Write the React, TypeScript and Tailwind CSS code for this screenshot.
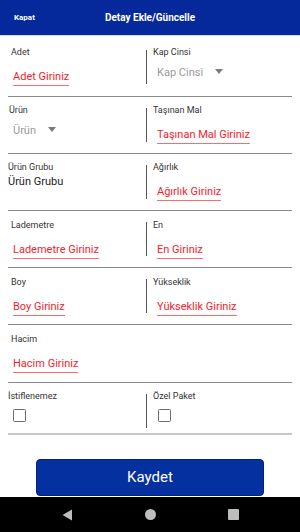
import { ReactNode } from "react";

const font = { fontFamily: "Roboto, 'Noto Sans', sans-serif" };

function Label({ children }: { children: ReactNode }) {
  return <div className="text-[9px] leading-[11px] text-[#333]">{children}</div>;
}

function Input({ text }: { text: string }) {
  return (
    <div className="mt-[5px]">
      <span className="inline-block text-[11px] leading-[14px] pb-[1px] text-[#f5222d] border-b border-[#ff6b6b]">
        {text}
      </span>
    </div>
  );
}

function Select({ text }: { text: string }) {
  return (
    <div className="mt-[8px] flex items-center gap-[12px]">
      <span className="text-[11px] leading-[14px] text-[#9a9a9a]">{text}</span>
      <svg width="8" height="5" viewBox="0 0 8 5" className="-mt-[3px]">
        <path d="M0 0h8L4 5z" fill="#7a7a7a" />
      </svg>
    </div>
  );
}

function Checkbox() {
  return (
    <div className="mt-[7px] ml-[5px] w-[13px] h-[13px] border-[1.5px] border-[#6b6b6b] rounded-[1.5px]" />
  );
}

function Divider({ top = "mt-[11px]" }: { top?: string }) {
  return <div className={`${top} w-px h-[34px] bg-[#555] shrink-0`} />;
}

export default function App() {
  return (
    <div className="w-[300px] h-[532px] bg-white flex flex-col overflow-hidden" style={font}>
      {/* Header */}
      <div className="h-[35px] shrink-0 bg-[#05299a] grid grid-cols-[1fr_auto_1fr] items-center shadow-[0_1px_1px_rgba(0,0,0,0.15)]">
        <span className="pl-[14px] text-[8px] font-bold text-white">Kapat</span>
        <span className="text-[10px] font-bold text-white">Detay Ekle/Güncelle</span>
        <span />
      </div>

      {/* Row 1 */}
      <div className="mx-2 h-[62px] flex border-b border-[#8a8a8a]">
        <div className="w-[138px] pt-[12px] pl-[3px]">
          <Label>Adet</Label>
          <div className="pl-[2px]">
            <Input text="Adet Giriniz" />
          </div>
        </div>
        <Divider top="mt-[15px]" />
        <div className="flex-1 pt-[12px] pl-[6px]">
          <Label>Kap Cinsi</Label>
          <div className="pl-[4px]">
            <Select text="Kap Cinsi" />
          </div>
        </div>
      </div>

      {/* Row 2 */}
      <div className="mx-2 h-[57px] flex border-b border-[#8a8a8a]">
        <div className="w-[138px] pt-[8px] pl-[1px]">
          <Label>Ürün</Label>
          <div className="pl-[4px]">
            <Select text="Ürün" />
          </div>
        </div>
        <Divider />
        <div className="flex-1 pt-[8px] pl-[6px]">
          <Label>Taşınan Mal</Label>
          <div className="pl-[4px]">
            <Input text="Taşınan Mal Giriniz" />
          </div>
        </div>
      </div>

      {/* Row 3 */}
      <div className="mx-2 h-[57px] flex border-b border-[#8a8a8a]">
        <div className="w-[138px] pt-[8px]">
          <Label>Ürün Grubu</Label>
          <div className="mt-[2px] text-[11px] leading-[14px] text-[#222]">Ürün Grubu</div>
        </div>
        <Divider />
        <div className="flex-1 pt-[8px] pl-[6px]">
          <Label>Ağırlık</Label>
          <div className="pl-[4px]">
            <Input text="Ağırlık Giriniz" />
          </div>
        </div>
      </div>

      {/* Row 4 */}
      <div className="mx-2 h-[57px] flex border-b border-[#8a8a8a]">
        <div className="w-[138px] pt-[9px] pl-[3px]">
          <Label>Lademetre</Label>
          <div className="pl-[2px]">
            <Input text="Lademetre Giriniz" />
          </div>
        </div>
        <Divider />
        <div className="flex-1 pt-[9px] pl-[6px]">
          <Label>En</Label>
          <div className="pl-[4px]">
            <Input text="En Giriniz" />
          </div>
        </div>
      </div>

      {/* Row 5 */}
      <div className="mx-2 h-[57px] flex border-b border-[#8a8a8a]">
        <div className="w-[138px] pt-[9px] pl-[3px]">
          <Label>Boy</Label>
          <div className="pl-[2px]">
            <Input text="Boy Giriniz" />
          </div>
        </div>
        <Divider />
        <div className="flex-1 pt-[9px] pl-[6px]">
          <Label>Yükseklik</Label>
          <div className="pl-[4px]">
            <Input text="Yükseklik Giriniz" />
          </div>
        </div>
      </div>

      {/* Row 6 */}
      <div className="mx-2 h-[58px] border-b border-[#8a8a8a] pt-[9px] pl-[3px]">
        <Label>Hacim</Label>
        <div className="pl-[2px]">
          <Input text="Hacim Giriniz" />
        </div>
      </div>

      {/* Row 7 */}
      <div className="mx-2 h-[52px] flex border-b-2 border-[#c8c8c8]">
        <div className="w-[138px] pt-[8px]">
          <Label>İstiflenemez</Label>
          <Checkbox />
        </div>
        <Divider />
        <div className="flex-1 pt-[8px] pl-[6px]">
          <Label>Özel Paket</Label>
          <Checkbox />
        </div>
      </div>

      {/* Save */}
      <div className="mt-[24px] px-[36px]">
        <button className="w-full h-[37px] rounded-[4px] bg-[#0530a0] border border-[#02237e] text-white text-[15px]">
          Kaydet
        </button>
      </div>

      {/* Android nav */}
      <div className="mt-auto h-[35px] bg-black flex items-center justify-center gap-[63px]">
        <div className="w-[20px] flex justify-center">
          <svg width="11" height="12" viewBox="0 0 11 12">
            <path d="M10 0.5v11L0.5 6z" fill="#bdbdbd" />
          </svg>
        </div>
        <div className="w-[20px] flex justify-center">
          <div className="w-[11px] h-[11px] rounded-full bg-[#bdbdbd]" />
        </div>
        <div className="w-[20px] flex justify-center">
          <div className="w-[11px] h-[11px] rounded-[1px] bg-[#bdbdbd]" />
        </div>
      </div>
    </div>
  );
}
